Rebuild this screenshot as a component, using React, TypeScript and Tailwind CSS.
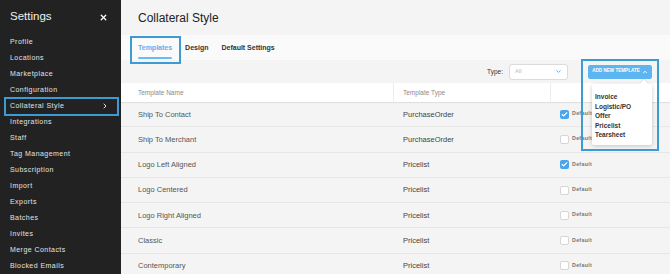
import React from "react";
import { ChevronDown, ChevronRight, ChevronUp, Check, X } from "lucide-react";

const menu = [
  "Profile",
  "Locations",
  "Marketplace",
  "Configuration",
  "Collateral Style",
  "Integrations",
  "Staff",
  "Tag Management",
  "Subscription",
  "Import",
  "Exports",
  "Batches",
  "Invites",
  "Merge Contacts",
  "Blocked Emails",
];

const rows = [
  { name: "Ship To Contact", type: "PurchaseOrder", checked: true },
  { name: "Ship To Merchant", type: "PurchaseOrder", checked: false },
  { name: "Logo Left Aligned", type: "Pricelist", checked: true },
  { name: "Logo Centered", type: "Pricelist", checked: false },
  { name: "Logo Right Aligned", type: "Pricelist", checked: false },
  { name: "Classic", type: "Pricelist", checked: false },
  { name: "Contemporary", type: "Pricelist", checked: false },
];

const templateTypes = ["Invoice", "Logistic/PO", "Offer", "Pricelist", "Tearsheet"];

function Sidebar() {
  return (
    <aside className="w-[121px] shrink-0 bg-[#222222] text-[#e2e2e2]">
      <div className="h-[34px] flex items-center justify-between pl-[10px] pr-[13px]">
        <span className="text-[11.5px] text-[#f0f0f0]">Settings</span>
        <X size={9} strokeWidth={3.5} className="text-white" />
      </div>
      <nav className="flex flex-col">
        {menu.map((item) => {
          const active = item === "Collateral Style";
          return (
            <div
              key={item}
              className="relative h-[16px] shrink-0 flex items-center justify-between pl-[10px] pr-[12px] text-[7px] tracking-[0.45px]"
            >
              <span>{item}</span>
              {active && (
                <>
                  <ChevronRight size={8} strokeWidth={3} />
                  <span className="absolute left-[4px] right-[2px] top-[-1px] bottom-[-2px] border-2 border-[#3d9bd4]" />
                </>
              )}
            </div>
          );
        })}
      </nav>
    </aside>
  );
}

function Checkbox({ checked }: { checked: boolean }) {
  return checked ? (
    <span className="w-[9px] h-[9px] rounded-[2px] bg-[#4aa5ec] flex items-center justify-center">
      <Check size={7} strokeWidth={4} className="text-white" />
    </span>
  ) : (
    <span className="w-[9px] h-[9px] rounded-[2px] bg-white border border-[#d6d6d6]" />
  );
}

export default function App() {
  return (
    <div className="flex w-[670px] h-[274px] overflow-hidden font-['Liberation_Sans',Arial,sans-serif]">
      <Sidebar />
      <main className="relative flex-1 bg-[#f4f4f4] flex flex-col">
        <div className="h-[35px] shrink-0 flex items-center pl-[17px] text-[12px] text-[#222]">
          Collateral Style
        </div>

        <div className="relative h-[25px] shrink-0 bg-[#fafafa] flex items-stretch pl-[17px] gap-[13px] text-[7px] font-bold text-[#333]">
          <div className="flex flex-col justify-center relative pt-[2px]">
            <span className="text-[#5bb1ec]">Templates</span>
            <span className="absolute left-0 right-0 bottom-[1px] h-[2px] bg-[#6cbcf0] rounded" />
          </div>
          <div className="flex items-center pt-[2px]">Design</div>
          <div className="flex items-center pt-[2px]">Default Settings</div>
          <span className="absolute left-[9px] top-[1px] w-[51px] h-[28px] border-2 border-[#3d9bd4]" />
        </div>

        <div className="h-[23px] shrink-0 flex items-center justify-end pr-[18px]">
          <span className="text-[6.5px] text-[#333] mr-[6px]">Type:</span>
          <div className="w-[59px] h-[16px] bg-white border border-[#dcdcdc] rounded-[3px] flex items-center justify-between px-[5px] mr-[20px]">
            <span className="text-[6px] text-[#bbb]">All</span>
            <ChevronDown size={7} strokeWidth={3} className="text-[#4aa5ec]" />
          </div>
          <div className="w-[64px] h-[14px] bg-[#5cb5f0] rounded-[2px] flex items-center justify-center gap-[2px] text-white text-[4.6px] font-bold">
            <span>ADD NEW TEMPLATE</span>
            <ChevronUp size={6} strokeWidth={4} />
          </div>
        </div>

        <div className="h-[19px] shrink-0 bg-white flex text-[6.5px] text-[#8a8a8a] shadow-[0_1px_1px_rgba(0,0,0,0.08)] relative">
          <div className="w-[273px] flex items-center pl-[17px] border-r border-[#ececec]">Template Name</div>
          <div className="w-[157px] flex items-center pl-[9px] border-r border-[#ececec]">Template Type</div>
          <div className="flex-1" />
        </div>

        <div className="flex flex-col shrink-0">
          {rows.map((r) => (
            <div key={r.name} className="h-[25.3px] flex border-b border-[#e6e6e6] shrink-0">
              <div className="w-[273px] flex items-center pl-[17px] text-[7.5px] text-[#555]">{r.name}</div>
              <div className="w-[157px] flex items-center pl-[9px] text-[7.5px] text-[#444]">{r.type}</div>
              <div className="flex-1 flex items-center pl-[9px] gap-[3px]">
                <Checkbox checked={r.checked} />
                <span className="text-[5.3px] font-bold text-[#777] tracking-[0.3px]">Default</span>
              </div>
            </div>
          ))}
        </div>

        <div className="absolute z-10 left-[471px] top-[84px] w-[60px] h-[61px] bg-white rounded-[2px] shadow-[0_1px_4px_rgba(0,0,0,0.2)] flex flex-col justify-center pl-[3px] pt-[3px] text-[6.5px] font-bold text-[#333]">
          <span className="absolute right-[5px] top-[-3px] w-[6px] h-[6px] bg-white rotate-45 shadow-[-1px_-1px_1px_rgba(0,0,0,0.06)]" />
          {templateTypes.map((t) => (
            <span key={t} className="leading-[9.5px]">{t}</span>
          ))}
        </div>
        <span className="absolute z-10 left-[460px] top-[59px] w-[78px] h-[92px] border-2 border-[#3d9bd4]" />
      </main>
    </div>
  );
}
